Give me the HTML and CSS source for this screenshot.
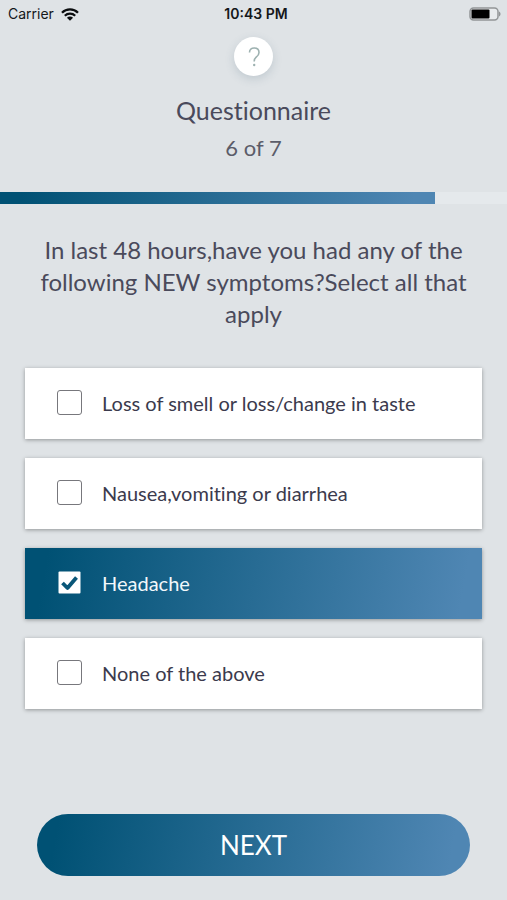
FILE: index.html
```html
<!DOCTYPE html>
<html lang="en">
<head>
<meta charset="utf-8">
<meta name="viewport" content="width=device-width, initial-scale=1">
<title>Questionnaire</title>
<link rel="stylesheet" href="styles.css">
</head>
<body>
<div class="status">
  <div class="status-left">
    <span>Carrier</span>
    <svg class="wifi" viewBox="0 0 18 13" aria-hidden="true">
      <path d="M1 4.800C5.400.3 12.600.3 17 4.800" fill="none" stroke="#0b0d0f" stroke-width="2.300"/>
      <path d="M3.800 7.800c2.900-2.900 7.500-2.900 10.400 0" fill="none" stroke="#0b0d0f" stroke-width="2.200"/>
      <path d="M5.900 9.700c1.700-1.700 4.500-1.700 6.200 0L9 12.800z" fill="#0b0d0f"/>
    </svg>
  </div>
  <time class="clock">10:43 PM</time>
  <svg class="battery" viewBox="0 0 33 15" aria-hidden="true">
    <rect x="2" y="1" width="28" height="12" rx="3.500" fill="#e8ebed" stroke="#929597" stroke-width="1.500"/>
    <rect x="3.500" y="2.500" width="18" height="9" rx="1" fill="#000"/>
    <path d="M31 4.500v5c2-.8 2-4.200 0-5z" fill="#929597"/>
  </svg>
</div>
<header class="header">
  <button class="help" type="button" aria-label="Help">
    <svg viewBox="0 0 14 22" aria-hidden="true">
      <path d="M2.500 6.500C2.500 3.500 4.500 2 7.200 2s4.800 1.600 4.800 4.500c0 2.300-1.300 3.500-2.800 4.700C7.700 12.400 7.200 13 7.200 15.500" fill="none" stroke="#9db1b0" stroke-width="1.600"/>
      <circle cx="7.200" cy="19" r="1.200" fill="#9db1b0"/>
    </svg>
  </button>
  <h1 class="title">Questionnaire</h1>
  <p class="count">6 of 7</p>
</header>
<progress class="progress" value="6" max="7" aria-label="Question 6 of 7"></progress>
<form class="form">
  <fieldset class="options">
    <legend class="question">In last 48 hours,have you had any of the following NEW symptoms?Select all that apply</legend>
    <label class="option"><input class="box" type="checkbox"><span>Loss of smell or loss/change in taste</span></label>
    <label class="option"><input class="box" type="checkbox"><span>Nausea,vomiting or diarrhea</span></label>
    <label class="option"><input class="box" type="checkbox" checked><span>Headache</span></label>
    <label class="option"><input class="box" type="checkbox"><span>None of the above</span></label>
  </fieldset>
  <button class="next" type="button">NEXT</button>
</form>
</body>
</html>
```
FILE: styles.css
```css
:root {
  --ink: #4a4a5b;
  --bg: #dfe3e6;
  --blend: linear-gradient(100deg, #005174 5%, #4f86b3 95%);
}

* {
  box-sizing: border-box;
}

body {
  margin: 0;
  min-height: 100vh;
  display: flex;
  flex-direction: column;
  background: var(--bg);
  color: var(--ink);
  font-family: Lato, "Liberation Sans", sans-serif;
  font-variant-ligatures: none;
}

.status {
  display: grid;
  grid-template-columns: 1fr auto 1fr;
  align-items: center;
  height: 28px;
  padding: 0 6px 0 8px;
  font: 14px/20px Inter, "Liberation Sans", sans-serif;
  color: #14171a;
}

.status-left {
  display: flex;
  align-items: center;
  gap: 7px;
}

.wifi {
  width: 18px;
  height: 13px;
}

.clock {
  padding-left: 3px;
  font-weight: 600;
}

.battery {
  justify-self: end;
  width: 33px;
  height: 15px;
}

.header {
  display: flex;
  flex-direction: column;
  align-items: center;
  padding: 9px 24px 29px;
}

.help {
  display: grid;
  place-items: center;
  width: 39px;
  height: 39px;
  padding: 0;
  border: 0;
  border-radius: 50%;
  background: #fff;
  box-shadow: 0 3px 10px rgba(70, 100, 120, 0.2);
}

.help svg {
  width: 14px;
  height: 22px;
}

.title {
  margin: 18px 0 7px;
  font-size: 25px;
  line-height: 32px;
  font-weight: 400;
}

.count {
  margin: 0;
  font-size: 22px;
  line-height: 30px;
  color: #5b5c69;
}

.progress {
  appearance: none;
  display: block;
  width: 100%;
  height: 12px;
  border: 0;
  background: #e5e9ec;
}

.progress::-webkit-progress-bar {
  background: #e5e9ec;
}

.progress::-webkit-progress-value {
  background: var(--blend);
}

.form {
  flex: 1;
  display: flex;
  flex-direction: column;
  padding: 30px 25px 24px;
}

.options {
  display: flex;
  flex-direction: column;
  gap: 19px;
  min-width: 0;
  margin: 0;
  padding: 0;
  border: 0;
}

.question {
  width: 100%;
  margin-bottom: 38px;
  padding: 0 8px;
  font-size: 24px;
  line-height: 32px;
  text-align: center;
}

.option {
  display: flex;
  align-items: center;
  gap: 20px;
  min-height: 71px;
  padding: 11px 32px 13px;
  background: #fff;
  box-shadow: 0 1px 4px rgba(0, 0, 0, 0.35);
  color: #3b3a4d;
  font-size: 20px;
  line-height: 26px;
}

.option:has(:checked) {
  background: var(--blend);
  color: #f2f8fb;
}

.box {
  appearance: none;
  flex: none;
  width: 25px;
  height: 25px;
  margin: 0;
  border: 1px solid #77777c;
  border-radius: 3px;
  background: #fff;
}

.box:checked {
  border-color: transparent;
  background: url("data:image/svg+xml,%3Csvg xmlns='http://www.w3.org/2000/svg' viewBox='0 0 23 23'%3E%3Crect x='.5' y='.5' width='22' height='22' rx='1' fill='%23fff'/%3E%3Cpath d='M4.500 12l5 5L18.500 6.500' fill='none' stroke='%23095678' stroke-width='3.800' stroke-linejoin='round'/%3E%3C/svg%3E") center / 23px 23px no-repeat;
}

.next {
  align-self: stretch;
  margin: auto 12px 0;
  height: 62px;
  border: 0;
  border-radius: 31px;
  background: var(--blend);
  color: #fff;
  font: 26px/32px Lato, "Liberation Sans", sans-serif;
}
```
